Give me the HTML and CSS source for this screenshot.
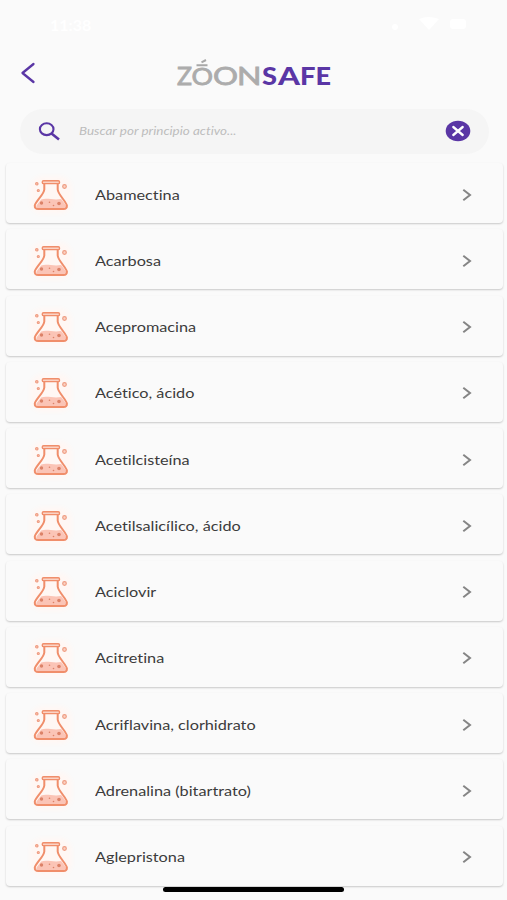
FILE: index.html
```html
<!DOCTYPE html>
<html lang="es">
<head>
<meta charset="utf-8">
<title>ZoonSafe</title>
<link rel="stylesheet" href="styles.css">
</head>
<body>
<svg class="defs" aria-hidden="true">
  <symbol id="flask" viewBox="0 0 36 32">
    <path d="M8.200 20.500C14 18.500 20 21.500 28.200 20L33 26.500Q34 30 30.500 30H6Q2.500 30 3.500 26.500Z" fill="#fbc4b6"/>
    <path d="M11.300 4.500V10.500C11 15.500 2.500 22.500 1.800 26.500Q1.500 30 5.200 30H30.500Q34.200 30 33.900 26.500C33.200 22.500 25 15.500 24.700 10.500V4.500" fill="none" stroke="#f08e6b" stroke-width="2"/>
    <rect x="9.300" y="1.800" width="17.200" height="2.800" rx="1.200" fill="#fbd3c5" stroke="#f08e6b" stroke-width="1.400"/>
    <g fill="#dc8268"><circle cx="8.500" cy="24" r="1.700"/><circle cx="16.500" cy="23.300" r=".8"/><circle cx="26" cy="24.500" r="1.800"/><circle cx="20.500" cy="26.500" r=".8"/></g>
    <g fill="#fbd3c5" stroke="#ef9b80" stroke-width="1.200"><circle cx="3.800" cy="4.800" r="1.200"/><circle cx="5.300" cy="11.500" r="1"/><circle cx="31.500" cy="7.500" r="1.800"/></g>
  </symbol>
  <symbol id="chevron" viewBox="0 0 10 14"><path d="M1.300 1.800L8 7L1.300 12.200" fill="none" stroke="#858585" stroke-width="2"/></symbol>
</svg>
<div class="status">
  <span class="time">11:38</span>
  <svg class="indicators" viewBox="0 0 78 16" fill="#fff"><circle cx="5" cy="11" r="3"/><path d="M29 3Q38 -1 49 3L39 14Z"/><rect x="60" y="3" width="16" height="10" rx="3"/></svg>
</div>
<header class="header">
  <svg class="back" viewBox="0 0 16 22"><path d="M13.500 2L2.500 11L13.500 20" fill="none" stroke="#5a36a5" stroke-width="2.300" stroke-linecap="round" stroke-linejoin="round"/></svg>
  <svg class="logo" viewBox="0 0 160 32" aria-label="ZoonSafe">
    <g class="grey">
      <text x="1" y="27.200" textLength="15" lengthAdjust="spacingAndGlyphs">Z</text>
      <text class="small" x="15.500" y="27.200" textLength="21.500" lengthAdjust="spacingAndGlyphs">O</text>
      <text x="37" y="27.200" textLength="25" lengthAdjust="spacingAndGlyphs">O</text>
      <text x="61" y="27.200" textLength="24.500" lengthAdjust="spacingAndGlyphs">N</text>
    </g>
    <path d="M20.500 7.300H31.500M25.500 4.300L30 2" fill="none" stroke="#a8a8a8" stroke-width="2"/>
    <g class="violet">
      <text x="86" y="27.200" textLength="15" lengthAdjust="spacingAndGlyphs">S</text>
      <text x="102" y="27.200" textLength="22" lengthAdjust="spacingAndGlyphs">A</text>
      <text x="124" y="27.200" textLength="15.500" lengthAdjust="spacingAndGlyphs">F</text>
      <text x="139.500" y="27.200" textLength="15.500" lengthAdjust="spacingAndGlyphs">E</text>
    </g>
  </svg>
</header>
<div class="search">
  <svg class="magnifier" viewBox="0 0 22 19"><g fill="none" stroke="#5a36a5"><ellipse cx="8.700" cy="7.200" rx="6.800" ry="5.900" stroke-width="2.100"/><path d="M13.500 11.500L21 17.500" stroke-width="2.600"/></g></svg>
  <span class="placeholder">Buscar por principio activo...</span>
  <svg class="clear" viewBox="0 0 26 22"><ellipse cx="13" cy="11" rx="12.300" ry="10.300" fill="#5a36a5"/><path d="M8.300 7L17.700 15M17.700 7L8.300 15" stroke="#fff" stroke-width="2.300" stroke-linecap="round"/></svg>
</div>
<main class="list">
  <div class="card"><svg class="flask"><use href="#flask"/></svg><span class="name">Abamectina</span><svg class="chevron"><use href="#chevron"/></svg></div>
  <div class="card"><svg class="flask"><use href="#flask"/></svg><span class="name">Acarbosa</span><svg class="chevron"><use href="#chevron"/></svg></div>
  <div class="card"><svg class="flask"><use href="#flask"/></svg><span class="name">Acepromacina</span><svg class="chevron"><use href="#chevron"/></svg></div>
  <div class="card"><svg class="flask"><use href="#flask"/></svg><span class="name">Acético, ácido</span><svg class="chevron"><use href="#chevron"/></svg></div>
  <div class="card"><svg class="flask"><use href="#flask"/></svg><span class="name">Acetilcisteína</span><svg class="chevron"><use href="#chevron"/></svg></div>
  <div class="card"><svg class="flask"><use href="#flask"/></svg><span class="name">Acetilsalicílico, ácido</span><svg class="chevron"><use href="#chevron"/></svg></div>
  <div class="card"><svg class="flask"><use href="#flask"/></svg><span class="name">Aciclovir</span><svg class="chevron"><use href="#chevron"/></svg></div>
  <div class="card"><svg class="flask"><use href="#flask"/></svg><span class="name">Acitretina</span><svg class="chevron"><use href="#chevron"/></svg></div>
  <div class="card"><svg class="flask"><use href="#flask"/></svg><span class="name">Acriflavina, clorhidrato</span><svg class="chevron"><use href="#chevron"/></svg></div>
  <div class="card"><svg class="flask"><use href="#flask"/></svg><span class="name">Adrenalina (bitartrato)</span><svg class="chevron"><use href="#chevron"/></svg></div>
  <div class="card"><svg class="flask"><use href="#flask"/></svg><span class="name">Aglepristona</span><svg class="chevron"><use href="#chevron"/></svg></div>
</main>
<div class="home-bar"></div>
</body>
</html>
```

FILE: styles.css
```css
* { box-sizing: border-box; }
body {
  margin: 0;
  height: 900px;
  overflow: hidden;
  position: relative;
  background: #fafafa;
  font-family: Lato, "Liberation Sans", sans-serif;
  font-variant-ligatures: none;
}
.defs { position: absolute; width: 0; height: 0; }
.status {
  height: 46px;
  display: flex;
  justify-content: space-between;
  align-items: center;
  padding: 2px 39px 0 50px;
  color: #fff;
  font-size: 16px;
  font-weight: 700;
}
.indicators { width: 78px; height: 16px; }
.header {
  height: 63px;
  display: flex;
  align-items: flex-start;
  padding-left: 20px;
}
.back { width: 16px; height: 22px; margin-top: 16px; }
.logo { width: 160px; height: 32px; margin: 12px 0 0 140px; font-size: 25.500px; font-weight: 400; }
.grey { fill: #acacac; stroke: #acacac; stroke-width: .8px; }
.small { font-size: 23.500px; }
.violet { fill: #5a36a5; font-weight: 900; }
.search {
  height: 45px;
  margin: 0 18px 0 20px;
  padding: 0 18px 1px;
  display: flex;
  align-items: center;
  border-radius: 23px;
  background: #f5f5f5;
}
.magnifier { width: 22px; height: 19px; }
.placeholder {
  margin: 0 auto 0 19px;
  padding-bottom: 1px;
  font-size: 11.500px;
  font-style: italic;
  color: #bdbdbd;
  white-space: nowrap;
  transform: scaleX(1.17);
  transform-origin: left;
}
.clear { width: 26px; height: 22px; }
.list {
  display: flex;
  flex-direction: column;
  gap: 6.250px;
  padding: 9px 4px 0 6px;
}
.card {
  height: 60px;
  flex: none;
  display: flex;
  align-items: center;
  padding: 3px 31px 0 27px;
  border-radius: 4px;
  background: #fafafa;
  box-shadow: 0 1px 2px rgba(0, 0, 0, .2);
}
.flask {
  width: 36px;
  height: 32px;
  overflow: visible;
  border-radius: 10px;
  background: #fff7f4;
  box-shadow: 0 0 5px 3px #fff7f4;
}
.name {
  margin: 0 auto 0 26px;
  font-size: 13px;
  color: #3c3c3c;
  white-space: nowrap;
  transform: scaleX(1.25);
  transform-origin: left;
}
.chevron { width: 10px; height: 14px; }
.home-bar {
  position: absolute;
  left: 163px;
  top: 887px;
  width: 181px;
  height: 5px;
  border-radius: 3px;
  background: #000;
}
```
